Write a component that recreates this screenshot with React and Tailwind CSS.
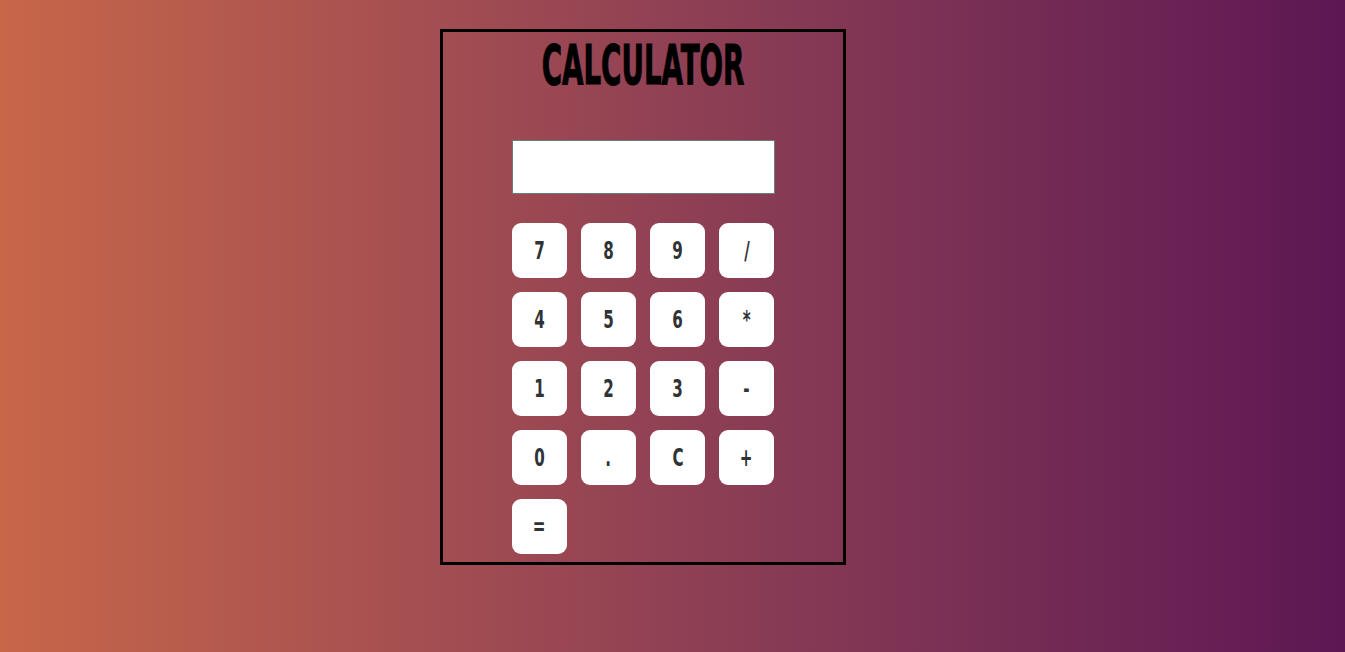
import React, { useState } from 'react'

const keys = ['7','8','9','/','4','5','6','*','1','2','3','-','0','.','C','+','=']
const narrow = '"Liberation Sans Narrow", "DejaVu Sans Condensed", "Liberation Sans", sans-serif'

export default function App(){
  const [value,setValue]=useState('')

  const press = (k)=>{
    if(k==='C') return setValue('')
    if(k==='='){
      try{
        // eslint-disable-next-line no-new-func
        setValue(String(Function('return ('+value+')')()))
      }catch(e){
        setValue('Error')
      }
      return
    }
    setValue(v=>v+k)
  }

  return (
    <div className="min-h-screen w-full bg-gradient-to-r from-[#c76648] to-[#5d1753] flex justify-center pt-[29px] pr-[59px]">
      <div className="w-[406px] h-[536px] border-[3px] border-black flex flex-col items-center">
        <h1 className="mt-[6px] h-[56px] text-[55px] leading-none font-bold text-black scale-x-[0.56] [-webkit-text-stroke:1px_black]" style={{fontFamily:narrow}}>
          CALCULATOR
        </h1>
        <input
          value={value}
          onChange={e=>setValue(e.target.value)}
          className="mt-[46px] w-[263px] h-[54px] bg-white border border-[#6b7b7b] outline-none px-2 text-xl"
        />
        <div className="mt-[29px] grid grid-cols-4 gap-[14px] w-[262px]">
          {keys.map(k=>(
            <button
              key={k}
              onClick={()=>press(k)}
              className="w-[55px] h-[55px] bg-white rounded-[9px] flex items-center justify-center text-[#2f3336]"
              style={{fontFamily:narrow}}
            >
              <span className="text-[24px] leading-none font-bold scale-x-[0.7]">{k}</span>
            </button>
          ))}
        </div>
      </div>
    </div>
  )
}
